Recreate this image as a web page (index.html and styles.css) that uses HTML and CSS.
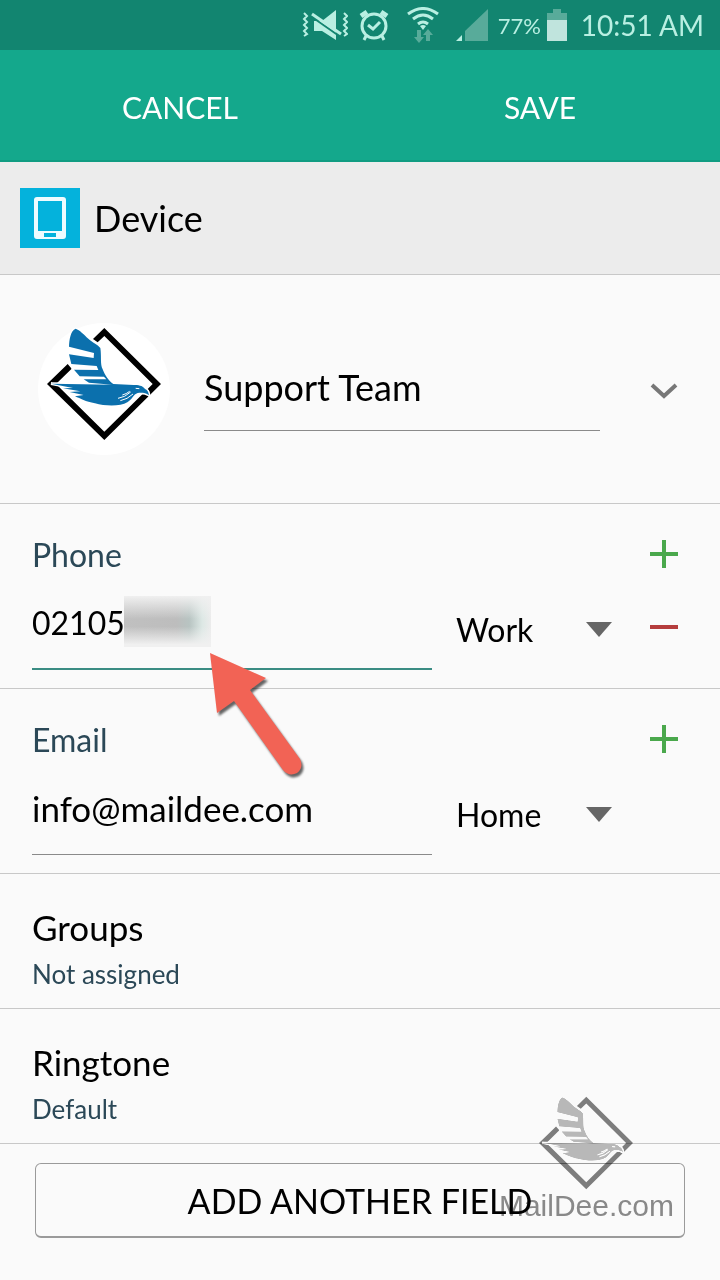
FILE: index.html
```html
<!DOCTYPE html>
<html lang="en">
<head>
    <meta charset="UTF-8">
    <meta name="viewport" content="width=device-width, initial-scale=1.0">
    <title>Edit contact</title>
    <link rel="stylesheet" href="styles.css">
</head>
<body>

    <!-- Logo shapes, shared by the avatar and the watermark -->
    <svg class="defs" aria-hidden="true">
        <symbol id="logo" viewBox="50 38 342 338">
            <path class="logo-frame" d="M222 39 L392 207 L222 375 L50 207 L112 147 L124 161 L77 207 L222 350 L343 231 L356 242 L357 228 L352 222 L367 207 L222 63 L202 82 L188 72 Z"/>
            <path class="logo-bird" d="M136 41 C148 45 160 58 174 71 C188 84 203 89 210 99 C214 124 209 148 217 163 C224 181 235 198 249 207 L310 210 C327 209 340 214 344 222 C350 224 355 230 356 241 C346 233 334 233 322 234 C309 238 306 253 291 262 C270 275 225 274 194 265 C165 260 151 251 134 244 L160 240 L118 231 L150 229 L98 220 L128 219 L62 206 L246 209 L176 203 L160 193 L228 193 L221 185 L148 184 L131 164 L204 165 L199 153 L123 147 L116 118 L190 129 L191 114 L116 95 C117 73 121 46 136 41 Z"/>
            <path class="logo-lines" d="M263 250 Q284 247 301 231 M270 257 Q291 253 308 237 M276 240 Q288 237 298 229 M316 220 L327 221"/>
        </symbol>
    </svg>

    <div class="status-bar">
        <svg class="icon-mute" viewBox="0 0 46 32" aria-hidden="true">
            <path class="fill" d="M12 12 H20 L34 1 V31 L20 22 H12 Z"/>
            <path class="cut" d="M10 8 L40 29"/>
            <path class="line" d="M10 5 L39 25"/>
            <path class="zig" d="M2 4 L5 7 L2 10 L5 13 L2 16 L5 19 L2 22 L5 25 L2 27 M42 4 L45 7 L42 10 L45 13 L42 16 L45 19 L42 22 L45 25 L42 27"/>
        </svg>
        <svg class="icon-alarm" viewBox="0 0 32 32" aria-hidden="true">
            <circle cx="16" cy="17" r="12"/>
            <path d="M10 16 L15 20 L22 13"/>
            <path class="bells" d="M3 7 L9 3 M23 3 L29 7"/>
            <path d="M8 27 L6 31 M24 27 L26 31"/>
        </svg>
        <svg class="icon-wifi" viewBox="0 0 34 36" aria-hidden="true">
            <path class="arc" d="M2 7 Q17 -4 32 7 M7 12 Q17 4 27 12 M12 17 Q17 13 22 17"/>
            <path class="dot" d="M14 19 Q17 17 20 19 L17 23 Z"/>
            <path class="dim" d="M11 23 H15 V30 H18 L13 36 L8 30 H11 Z M20 34 H24 V28 H27 L22 22 L17 28 H20 Z"/>
        </svg>
        <svg class="icon-signal" viewBox="0 0 32 32" aria-hidden="true">
            <path class="dim" d="M9 32 V22 L32 0 V32 Z"/>
            <path class="fill" d="M0 32 L6 26 V32 Z"/>
        </svg>
        <span class="battery-level">77%</span>
        <svg class="icon-battery" viewBox="0 0 20 32" aria-hidden="true">
            <path class="dim" d="M0 4 H6 V0 H14 V4 H20 V11 H0 Z"/>
            <path class="fill" d="M0 11 H20 V32 H0 Z"/>
        </svg>
        <span class="clock">10:51 AM</span>
    </div>

    <header class="action-bar">
        <button type="button">CANCEL</button>
        <button type="submit" form="contact">SAVE</button>
    </header>

    <div class="account">
        <svg class="account-icon" viewBox="0 0 60 60" aria-hidden="true">
            <rect class="tile" width="60" height="60"/>
            <path class="phone" fill-rule="evenodd" d="M17 9 H43 Q46 9 46 12 V48 Q46 51 43 51 H17 Q14 51 14 48 V12 Q14 9 17 9 Z M18 13 V43 H42 V13 Z M24 45 V49 H36 V45 Z"/>
        </svg>
        <span>Device</span>
    </div>

    <form id="contact">
        <section class="name-row">
            <div class="avatar">
                <svg viewBox="0 0 114 114" role="img" aria-label="Contact photo"><use href="#logo"/></svg>
            </div>
            <input class="name-input" type="text" value="Support Team" aria-label="Name">
            <button class="icon-button" type="button" aria-label="More name fields">
                <svg class="chevron" viewBox="0 0 28 16"><path d="M2 2 L14 13 L26 2"/></svg>
            </button>
        </section>

        <section class="field">
            <label class="field-label" for="phone">Phone</label>
            <button class="icon-button" type="button" aria-label="Add phone">
                <svg class="plus" viewBox="0 0 28 28"><path d="M0 14 H28 M14 0 V28"/></svg>
            </button>
            <div class="phone-value">
                <input class="field-input active" id="phone" type="tel" value="02105">
                <span class="smudge"></span>
                <svg class="pointer" viewBox="0 0 104 132" aria-hidden="true">
                    <path d="M4 3 L60 28 L44 40 L94 109 Q98 118 91 123 Q83 127 77 120 L28 51 L11 63 Z"/>
                </svg>
            </div>
            <div class="type-select">
                <select aria-label="Phone type">
                    <option>Work</option>
                    <option>Home</option>
                </select>
            </div>
            <button class="icon-button" type="button" aria-label="Remove phone">
                <svg class="minus" viewBox="0 0 28 28"><path d="M0 14 H28"/></svg>
            </button>
        </section>

        <section class="field">
            <label class="field-label" for="email">Email</label>
            <button class="icon-button" type="button" aria-label="Add email">
                <svg class="plus" viewBox="0 0 28 28"><path d="M0 14 H28 M14 0 V28"/></svg>
            </button>
            <input class="field-input" id="email" type="email" value="info@maildee.com">
            <div class="type-select">
                <select aria-label="Email type">
                    <option>Home</option>
                    <option>Work</option>
                </select>
            </div>
        </section>

        <a class="setting" href="#groups">
            <span class="setting-name">Groups</span>
            <span class="setting-value">Not assigned</span>
        </a>
        <a class="setting" href="#ringtone">
            <span class="setting-name">Ringtone</span>
            <span class="setting-value">Default</span>
        </a>

        <div class="add-row">
            <button class="add-button" type="button">ADD ANOTHER FIELD</button>
            <div class="watermark">
                <svg viewBox="0 0 94 94" aria-hidden="true"><use href="#logo"/></svg>
                <span>MailDee.com</span>
            </div>
        </div>
    </form>

</body>
</html>
```
FILE: styles.css
```css
* {
    box-sizing: border-box;
}

body {
    margin: 0;
    min-height: 100vh;
    background-color: #fafafa;
    color: #000;
    font-family: Lato, "Open Sans", sans-serif;
    font-size: 36px;
}

button, input, select {
    font: inherit;
    color: inherit;
    background: none;
    border: 0;
    border-radius: 0;
    padding: 0;
    margin: 0;
    outline: none;
}

.defs {
    position: absolute;
    width: 0;
    height: 0;
}

/* Status bar */
.status-bar {
    display: flex;
    align-items: center;
    justify-content: flex-end;
    height: 50px;
    padding-right: 16px;
    background-color: #128570;
    color: #b9efe2;
}

.status-bar svg {
    fill: none;
    stroke: #b9efe2;
    stroke-width: 3;
}

.status-bar .fill, .status-bar .dot {
    fill: #b9efe2;
    stroke: none;
}

.status-bar .dim {
    fill: #58ab9a;
    stroke: none;
}

.icon-mute {
    width: 46px;
    height: 32px;
    margin-right: 10px;
}

.status-bar .icon-mute .cut {
    stroke: #128570;
    stroke-width: 2;
}

.icon-mute .zig {
    stroke-width: 2;
}

.icon-alarm {
    width: 32px;
    height: 32px;
    margin-right: 16px;
}

.icon-alarm .bells {
    stroke-width: 5;
}

.icon-wifi {
    width: 34px;
    height: 36px;
    margin-right: 16px;
}

.icon-signal {
    width: 32px;
    height: 32px;
    margin-right: 10px;
}

.battery-level {
    font-size: 22px;
    margin-right: 6px;
}

.icon-battery {
    width: 20px;
    height: 32px;
    margin-right: 14px;
}

.icon-battery .fill {
    fill: #c0e4dd;
}

.clock {
    font-size: 28px;
}

/* Cancel / save */
.action-bar {
    display: flex;
    height: 112px;
    background-color: #14a88c;
    border-bottom: 2px solid #109c82;
    color: #fff;
}

.action-bar button {
    flex: 1;
    font-size: 30px;
    padding-top: 4px;
}

.account {
    display: flex;
    align-items: center;
    gap: 14px;
    height: 113px;
    padding: 0 20px;
    background-color: #ececec;
    border-bottom: 1px solid #c8c8c8;
}

.account-icon {
    width: 60px;
    height: 60px;
}

.account-icon .tile {
    fill: #04b2dc;
}

.account-icon .phone {
    fill: #effcff;
}

/* Name */
.name-row {
    display: flex;
    align-items: center;
    height: 229px;
    padding: 0 28px 0 38px;
    border-bottom: 1px solid #c8c8c8;
}

.avatar {
    display: flex;
    align-items: center;
    justify-content: center;
    width: 132px;
    height: 132px;
    padding-bottom: 10px;
    margin-right: 34px;
    border-radius: 50%;
    background-color: #fff;
}

.avatar svg {
    width: 114px;
    height: 114px;
}

.logo-frame {
    fill: #000;
}

.logo-bird {
    fill: #0b70ad;
    stroke: #fff;
    stroke-width: 8;
    paint-order: stroke;
}

.logo-lines {
    fill: none;
    stroke: #fff;
    stroke-width: 3;
}

.name-input {
    flex: 1;
    min-width: 0;
    height: 84px;
    margin-right: 36px;
    padding-bottom: 4px;
    border-bottom: 1px solid #8a8a8a;
}

.icon-button {
    display: flex;
    align-items: center;
    justify-content: center;
    width: 56px;
    height: 56px;
}

.icon-button svg {
    width: 28px;
    height: 28px;
    fill: none;
    stroke-width: 4;
}

.icon-button .chevron {
    height: 20px;
    padding-top: 4px;
    stroke: #777;
}

.plus {
    stroke: #4aa84c;
}

.minus {
    stroke: #b53d3d;
}

/* Phone and email */
.field {
    display: grid;
    grid-template-columns: 1fr 156px 56px;
    grid-template-rows: 60px 86px;
    column-gap: 24px;
    align-items: center;
    padding: 20px 28px 18px 32px;
    border-bottom: 1px solid #c8c8c8;
}

.field-label {
    grid-column: 1 / 3;
    font-size: 32px;
    color: #2b4857;
}

.field-input {
    display: block;
    width: 100%;
    height: 86px;
    padding-bottom: 8px;
    font-size: 35px;
    border-bottom: 1px solid #8a8a8a;
}

.field-input.active {
    font-size: 32px;
    border-bottom: 2px solid #3a8c83;
}

.phone-value {
    position: relative;
}

.smudge {
    position: absolute;
    left: 92px;
    top: 12px;
    width: 87px;
    height: 51px;
    background: linear-gradient(to bottom, #f0f0f0, rgba(240, 240, 240, 0) 45%, rgba(240, 240, 240, 0) 60%, #f0f0f0 95%), linear-gradient(to right, #c0c0c0, #bdbdbd 60%, #b8c4c2 75%, #dde8e5 90%, #ececec);
}

.pointer {
    position: absolute;
    left: 174px;
    top: 66px;
    width: 104px;
    height: 132px;
    fill: #f26355;
    filter: drop-shadow(2px 3px 1px rgba(0, 0, 0, 0.6));
    pointer-events: none;
    z-index: 1;
}

.type-select {
    display: flex;
    align-items: center;
    padding-top: 4px;
}

.type-select select {
    appearance: none;
    flex: 1;
    min-width: 0;
    font-size: 32px;
}

.type-select::after {
    content: "";
    border: 13px solid transparent;
    border-top: 15px solid #666;
    border-bottom: 0;
    pointer-events: none;
}

/* Groups and ringtone */
.setting {
    display: flex;
    flex-direction: column;
    height: 135px;
    padding: 32px 32px 0;
    border-bottom: 1px solid #c8c8c8;
    color: inherit;
    text-decoration: none;
}

.setting-name {
    font-size: 35px;
    line-height: 42px;
}

.setting-value {
    font-size: 26px;
    line-height: 52px;
    color: #2b4857;
}

.add-row {
    position: relative;
    padding: 19px 35px 40px;
}

.add-button {
    width: 100%;
    height: 75px;
    font-size: 34px;
    border: 1px solid #9a9a9a;
    border-bottom-width: 2px;
    border-radius: 6px;
}

.watermark {
    position: absolute;
    right: 46px;
    top: -48px;
    display: flex;
    flex-direction: column;
    align-items: center;
    color: #8c8c8c;
    font-family: "Liberation Sans", Arial, sans-serif;
    font-size: 30px;
    line-height: 32px;
    mix-blend-mode: multiply;
    pointer-events: none;
}

.watermark svg {
    width: 94px;
    height: 94px;
    filter: grayscale(1) brightness(1.3);
    opacity: 0.5;
}
```
